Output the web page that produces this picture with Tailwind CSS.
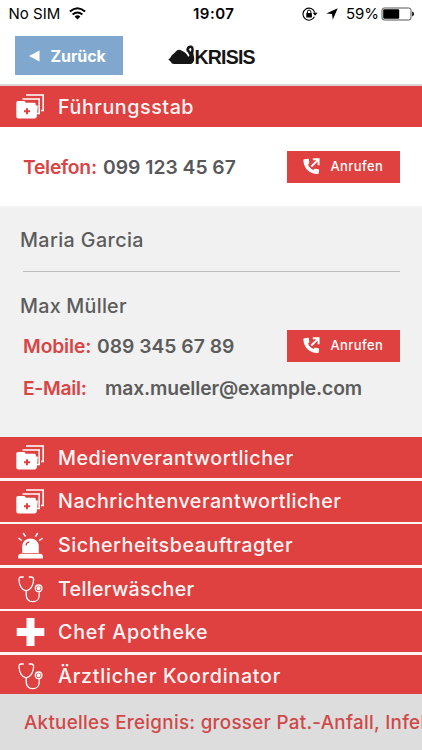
<!DOCTYPE html>
<html lang="de">
<head>
<meta charset="utf-8">
<meta name="viewport" content="width=device-width, initial-scale=1">
<title>Krisis</title>
<script src="https://cdn.jsdelivr.net/npm/@tailwindcss/browser@4"></script>
</head>
<body class="w-[422px] h-[750px] overflow-hidden bg-white font-['Inter',sans-serif] whitespace-nowrap">
<svg class="hidden">
  <symbol id="folders" viewBox="0 0 30 26">
    <path d="M11 2H28.2V17.5H26" fill="none" stroke="#fff" stroke-width="1.6"/>
    <path d="M7.5 6H24.2V20.5H22" fill="none" stroke="#fff" stroke-width="1.6"/>
    <path d="M3 8H9Q10.3 8 10.8 9.8H19.5Q20.8 9.8 20.8 11.2V12.6H22.9L21.8 23.5Q21.5 25.5 19.5 25.5H3.5Q1.3 25.5 1.3 23.5V9.8Q1.3 8 3 8Z" fill="#fff"/>
    <path d="M12 15.2V21.2M9 18.2H15" stroke="#df4040" stroke-width="2"/>
  </symbol>
  <symbol id="stethoscope" viewBox="0 0 30 30">
    <g fill="none" stroke="#fff" stroke-width="1.3" stroke-linecap="round">
      <path d="M7.3 3H5.2Q2.8 3 3 6C3.3 11.5 6 16.4 10.2 16.9C14.4 16.4 17.3 11.5 17.6 6Q17.7 3 15.3 3H13.2"/>
      <path d="M10.2 17V20.5C10.2 25.2 13 27.7 16.8 27.7C20.8 27.7 23.2 25 23.2 21.2V18"/>
      <circle cx="22.6" cy="14.3" r="3.3"/><circle cx="22.6" cy="14.3" r="1.4" fill="#fff"/>
    </g>
  </symbol>
  <symbol id="siren" viewBox="0 0 30 30">
    <path d="M6.2 22V15.5C6.2 4.8 22.8 4.8 22.8 15.5V22Z" fill="#fff"/>
    <path d="M2.2 27.4V25.5Q2.2 22.8 5 22.8H24Q26.8 22.8 26.8 25.5V27.4Z" fill="#fff"/>
    <path d="M10 14.5Q10.3 11.2 13.3 10.8" fill="none" stroke="#df4040" stroke-width="1.2"/>
    <path d="M2.4 7.2L5.8 9.5M7.2 2L9.6 5.7M21.8 2L19.4 5.7M26.6 7.2L23.2 9.5" stroke="#fff" stroke-width="1.5"/>
  </symbol>
  <symbol id="call" viewBox="0 0 17 17">
    <path d="M1.2 1.2L5 .8Q5.8 .8 5.9 1.6L6.3 5Q6.3 5.8 5 6.6Q6.4 10.6 10.5 12Q11.2 10.7 12 10.7L15.3 11.2Q16.2 11.4 16.1 12.2L15.8 15.2Q15.7 16 14.8 16C6.8 16.2 .6 10.5 .4 2.2Q.4 1.3 1.2 1.2Z" fill="#fff"/>
    <path d="M8.3 8.5L15 1.8M9.8 1.3H15.6V7.2" fill="none" stroke="#fff" stroke-width="1.9"/>
  </symbol>
</svg>

<header class="h-[86px] border-b-2 border-[#ddd5d5]">
  <div class="flex h-[28px] items-center text-black text-[15px]">
    <span class="w-[54px] ml-[8.5px] tracking-[0px]">No SIM</span>
    <svg class="ml-[6px] mt-[-2px]" width="17" height="13" viewBox="0 0 17 13">
      <g fill="none" stroke="#000" stroke-width="2"><path d="M.9 4.6Q8.5-2 16.1 4.6"/><path d="M3.6 7.6Q8.5 3.3 13.4 7.6"/></g><path d="M5.6 9.4Q8.5 7 11.4 9.4L8.5 12.4Z"/>
    </svg>
    <span class="ml-[107.5px] w-[44px] font-semibold tracking-[0.5px]">19:07</span>
    <svg class="ml-[64.5px]" width="16" height="14" viewBox="0 0 16 14">
      <path d="M12.4 9.8A6 6 0 1 1 12.8 5.6" fill="none" stroke="#000" stroke-width="1.1"/><path d="M10.7 5.8H15.5L13.1 8.8Z"/>
      <rect x="4.3" y="6" width="5.6" height="4.4" rx=".4"/><path d="M5.4 6V4.8A1.7 1.7 0 0 1 8.8 4.8V6" fill="none" stroke="#000" stroke-width="1"/>
    </svg>
    <svg class="ml-[8px]" width="12" height="12" viewBox="0 0 12 12"><path d="M11.7 .2L6.8 11.8L6 6.1L.3 5.4Z"/></svg>
    <span class="ml-[8.5px] w-[34px] tracking-[-0.1px]">59%</span>
    <svg class="ml-[1px]" width="34" height="14" viewBox="0 0 34 14">
      <rect x="1" y="1" width="29" height="12" rx="2.2" fill="#fff" stroke="#555" stroke-width="1"/><rect x="2.2" y="2.2" width="16" height="9.6" rx="1"/><path d="M31.2 4.6Q33 5 33 7T31.2 9.4Z"/>
    </svg>
  </div>
  <div class="flex pt-2 pl-[15px]">
    <div class="flex h-[39px] w-[108px] items-center bg-[#80a8cf] text-white">
      <svg class="ml-[14px]" width="11" height="12" viewBox="0 0 11 12"><path d="M0 6L10.5 .5V11.5Z" fill="#fff"/></svg>
      <span class="ml-[10.5px] mt-px text-[16px] font-bold tracking-[-0.1px]">Zurück</span>
    </div>
    <div class="ml-[45px] flex items-start pt-[9px] text-[#151515]">
      <svg width="28" height="21" viewBox="0 0 28 21">
        <path d="M.4 14.6Q2.6 13.2 3.6 10.6Q6.5 8.2 8.6 5.8Q10.5 4.2 13 5.2Q18 7.2 20 11.6C21.6 11.6 21.7 10.3 20.8 8.9C19.4 7 18.3 5.4 18.6 3.4C19 .4 23.6-.6 25.2 2C26.5 4.4 25.2 6.6 25.4 9.1C26.3 12.4 26.9 15.7 24.6 17.9Q23.4 19.1 21.2 19.1H6.2Q3.4 18.9 2.8 16.8Z" fill="currentColor"/>
        <path d="M21 3.9Q22.3 2.3 23.2 3.6Q23.7 5 22.7 6.8Q21.3 6 21 3.9Z" fill="#fff"/><path d="M18.4 3.9L21.6 3.6L18.8 6.8Z" fill="currentColor"/>
      </svg>
      <span class="-ml-[1.5px] mt-[2px] font-['Liberation_Sans',sans-serif] text-[19.5px] leading-[20px] font-bold tracking-[-0.8px]">KRISIS</span>
    </div>
  </div>
</header>

<main class="h-[608px] overflow-hidden text-[19.7px] font-medium text-[#fff5f5]">
  <div class="flex h-[41px] items-center bg-[#df4040] pl-[15px]">
    <svg class="mt-[-1px]" width="30" height="26"><use href="#folders"/></svg><h1 class="ml-[13px] mt-[3px] tracking-[0.55px]">Führungsstab</h1>
  </div>
  <div class="flex h-[79px] items-center bg-white pl-[23px] pr-[22px] text-[19.3px] text-[#58585a] font-semibold">
    <span class="mt-[2px] w-[80px] text-[#d94545] tracking-[-0.25px]">Telefon:</span><span class="mt-[2px] tracking-[0px]">099 123 45 67</span>
    <button class="ml-auto flex h-[32px] w-[113px] items-center bg-[#df4040] pl-4 text-[13px] font-medium tracking-[0.4px] text-white"><svg class="mr-[10.5px]" width="17" height="17"><use href="#call"/></svg>Anrufen</button>
  </div>
  <section class="h-[231px] bg-[#f1f1f1] text-[#5c5c5c]">
    <div class="ml-[23px] mr-[22px] h-[66px] border-b border-[#bdbdbd] pt-[20px] leading-[28px]"><span class="-ml-[3px] tracking-[0.4px]">Maria Garcia</span></div>
    <div class="pl-[20px] pt-[20px] leading-[28px] tracking-[0.25px]">Max Müller</div>
    <div class="mt-[9px] flex h-[33px] items-center pl-[23px] pr-[22px] text-[19.3px] font-semibold">
      <span class="mt-[2px] w-[74px] tracking-[-0.15px] text-[#d94545]">Mobile:</span><span class="mt-[2px] tracking-[0px]">089 345 67 89</span>
      <button class="ml-auto flex h-[32px] w-[113px] items-center bg-[#df4040] pl-4 text-[13px] font-medium tracking-[0.4px] text-white"><svg class="mr-[10.5px]" width="17" height="17"><use href="#call"/></svg>Anrufen</button>
    </div>
    <div class="mt-[12px] flex h-[28px] items-center pl-[23px] text-[19.3px] font-semibold">
      <span class="w-[82px] tracking-[-0.3px] text-[#d94545]">E-Mail:</span><span class="tracking-[-0.12px]">max.mueller@example.com</span>
    </div>
  </section>
  <ul class="flex flex-col gap-[2.6px] bg-[#fff4f4]">
    <li class="flex h-[41px] items-center bg-[#df4040] pl-[15px]"><svg class="mt-[-1px]" width="30" height="26"><use href="#folders"/></svg><span class="ml-[13px] mt-[2px] tracking-[0.5px]">Medienverantwortlicher</span></li>
    <li class="flex h-[41px] items-center bg-[#df4040] pl-[15px]"><svg class="mt-[-1px]" width="30" height="26"><use href="#folders"/></svg><span class="ml-[13px] mt-[2px] tracking-[0.5px]">Nachrichtenverantwortlicher</span></li>
    <li class="flex h-[41px] items-center bg-[#df4040] pl-4"><svg class="mt-[2px]" width="30" height="30"><use href="#siren"/></svg><span class="ml-[12px] mt-[2px] tracking-[0.53px]">Sicherheitsbeauftragter</span></li>
    <li class="flex h-[41px] items-center bg-[#df4040] pl-4"><svg class="mt-[1px]" width="30" height="30"><use href="#stethoscope"/></svg><span class="ml-[12px] mt-[2px] tracking-[0.3px]">Tellerwäscher</span></li>
    <li class="flex h-[41px] items-center bg-[#df4040] pl-4"><svg width="30" height="30" viewBox="0 0 30 30"><path d="M10.5 1H18.5V11H28.3V19H18.5V29H10.5V19H.7V11H10.5Z" fill="#fff"/></svg><span class="ml-[12px] mt-[2px] tracking-[0.73px]">Chef Apotheke</span></li>
    <li class="flex h-[41px] items-center bg-[#df4040] pl-4"><svg class="mt-[1px]" width="30" height="30"><use href="#stethoscope"/></svg><span class="ml-[12px] mt-[2px] tracking-[0.74px]">Ärztlicher Koordinator</span></li>
  </ul>
</main>
<footer class="flex h-[56px] items-center overflow-hidden bg-[#dddddd] pl-[24px] pt-[3px] text-[18.8px] font-medium tracking-[0.3px] text-[#d04848]">Aktuelles Ereignis: grosser Pat.-Anfall, Infektion</footer>
</body>
</html>
